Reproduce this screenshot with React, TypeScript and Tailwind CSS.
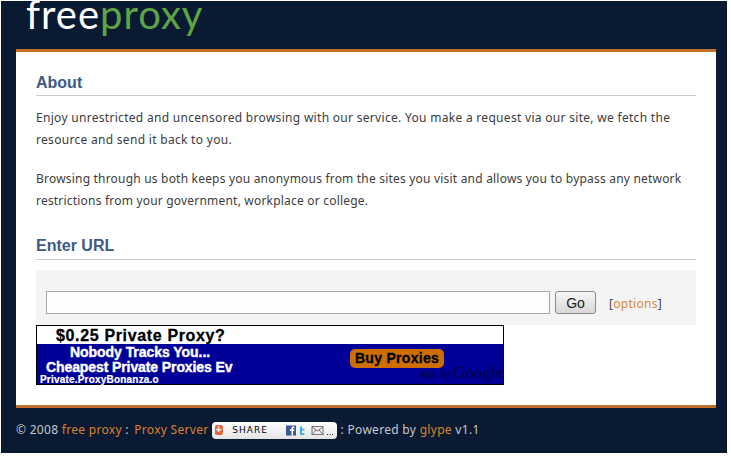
function ShareButton() {
  return (
    <span className="inline-flex items-center h-[17px] w-[125px] bg-gradient-to-b from-white to-[#e4e4e4] rounded-[4px] pl-[3px] pr-[2px] ml-[3px] mr-[4px] align-[1px]">
      <span className="w-[10px] h-[10px] rounded-[2px] bg-[#e0673f] flex items-center justify-center text-white text-[10px] font-bold leading-none font-['Liberation_Sans',sans-serif]">
        +
      </span>
      <span className="ml-[9px] w-[60px] text-[9px] tracking-[1px] text-black font-['DejaVu_Sans',sans-serif] leading-none">
        SHARE
      </span>
      <svg width="50" height="11" viewBox="0 0 50 11" className="shrink-0">
        <rect x="1" y="0.5" width="10" height="10" fill="#3b5998" />
        <path d="M6.5 10.5V6H5V4.3h1.5V3.2c0-1.2.8-1.8 1.8-1.8h1.2V3H8.700c-.5 0-.7.3-.7.7v.6h1.400L9.200 6H8v4.500z" fill="#fff" />
        <path d="M15 1.500h2v2.300h2.500v1.800H17v1.800c0 .6.3.9 1 .9h1.500v1.700H17c-1.500 0-2.200-.9-2.200-2.300z" fill="#2fb5e8" />
        <rect x="27" y="1.500" width="11" height="8" fill="#eee" stroke="#777" />
        <path d="M27 2l5.500 4L38 2M27 9.500l4-4.500M38 9.500l-4-4.500" fill="none" stroke="#777" />
        <path d="M42 9h1v1h-1zM44.500 9h1v1h-1zM47 9h1v1h-1z" fill="#222" />
      </svg>
    </span>
  );
}

function AdBanner() {
  return (
    <div className="w-[468px] h-[60px] border border-black font-['Liberation_Sans',sans-serif] font-bold">
      <div className="h-[18px] bg-white pl-[19px] text-[16px] leading-[20px] text-black tracking-[0.65px] [-webkit-text-stroke:0.3px_black]">
        $0.25 Private Proxy?
      </div>
      <div className="relative h-[40px] bg-[#000099] text-white">
        <div className="pl-[33px] text-[14px] leading-[15px] pt-px tracking-[-0.05px] [-webkit-text-stroke:0.4px_white]">
          Nobody Tracks You...
        </div>
        <div className="pl-[9px] text-[14px] leading-[14px] tracking-[-0.1px] [-webkit-text-stroke:0.4px_white]">
          Cheapest Private Proxies Ev
        </div>
        <div className="pl-[3px] text-[10px] leading-[8px] mt-[2px] tracking-[0.2px] [-webkit-text-stroke:0.2px_white]">
          Private.ProxyBonanza.o
        </div>
        <div className="absolute left-[313px] top-[5px] w-[94px] h-[19px] rounded-[5px] bg-[#cc6f00] text-black text-[14px] leading-[18px] text-center tracking-[0.3px] [-webkit-text-stroke:0.3px_black]">
          Buy Proxies
        </div>
        <div className="absolute right-0 bottom-[2px] flex items-baseline text-[#000044] font-normal">
          <span className="text-[10px] mr-[3px]">Ads by</span>
          <span className="text-[17px] leading-[15px] font-['Liberation_Serif',serif]">
            Google
          </span>
        </div>
      </div>
    </div>
  );
}

export default function App() {
  return (
    <div className="min-h-[460px] w-[731px] bg-white pt-px pl-px font-['Noto_Sans',sans-serif]">
      <div className="w-[726px] h-[452px] bg-[#0b1a33]">
        <header className="h-[48px] pl-[25px]">
          <div className="text-[40px] leading-[27px] tracking-[1px] font-['Lato',sans-serif] font-normal text-white">
            free<span className="text-[#5da544]">proxy</span>
          </div>
        </header>

        <main className="ml-[15px] w-[700px] bg-white border-t-[3px] border-b-[3px] border-[#c1702c] px-5 pt-[21px] pb-[20px]">
          <h2 className="text-[16px] leading-[20px] font-['Liberation_Sans',sans-serif] font-bold text-[#3d5a85] border-b border-[#cccccc] pb-[2px]">
            About
          </h2>
          <div className="text-[12px] leading-[22px] text-[#3c3c3c] tracking-[0.3px] mt-[11px]">
            <p>
              Enjoy unrestricted and uncensored browsing with our service. You make a request via our site, we fetch the resource and send it back to you.
            </p>
            <p className="mt-[17px] tracking-[0.2px]">
              Browsing through us both keeps you anonymous from the sites you visit and allows you to bypass any network restrictions from your government, workplace or college.
            </p>
          </div>
          <h2 className="mt-[24px] text-[16px] leading-[20px] font-['Liberation_Sans',sans-serif] font-bold text-[#3d5a85] border-b border-[#cccccc] pb-[3px]">
            Enter URL
          </h2>
          <div className="mt-[10px] h-[55px] bg-[#f4f4f4] pl-[10px] pt-[21px] flex items-start">
            <input className="w-[504px] h-[23px] bg-[#fdfdfd] border border-[#a8a8a8] outline-none" />
            <button className="ml-[5px] w-[41px] h-[23px] rounded-[3px] border border-[#8a8a8a] bg-gradient-to-b from-[#f6f6f6] to-[#d8d8d8] text-[14px] leading-none text-[#222222] font-['Liberation_Sans',sans-serif]">
              Go
            </button>
            <span className="ml-[13px] text-[12px] leading-[26px] tracking-[0.3px] text-[#444444]">
              [<span className="text-[#d08a3c]">options</span>]
            </span>
          </div>
          <AdBanner />
        </main>

        <footer className="pl-[15px] pt-[13px] text-[12px] leading-[17px] text-[#c4c8d0] tracking-[0.3px]">
          © 2008 <span className="text-[#d9822b]">free proxy</span> : <span className="ml-[2px] text-[#d9822b]">Proxy Server</span>
          <ShareButton />: Powered by <span className="text-[#d9822b]">glype</span> v1.1
        </footer>
      </div>
    </div>
  );
}
